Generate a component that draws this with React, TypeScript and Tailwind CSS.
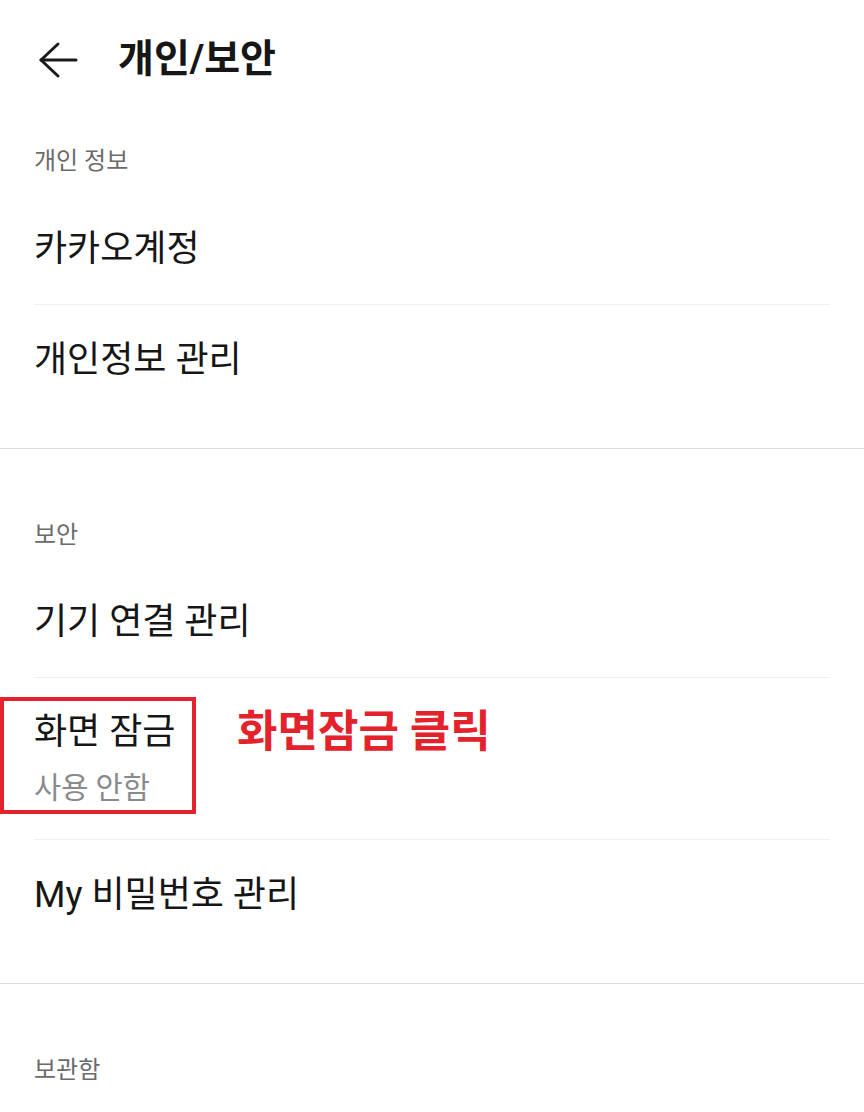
import React from "react";

const font = { fontFamily: 'Roboto, "Noto Sans CJK KR", sans-serif' };

function BackArrow() {
    return (
        <svg width="40" height="40" viewBox="0 0 40 40" fill="none" stroke="#1a1a1a" strokeWidth="3" strokeLinecap="round" strokeLinejoin="round">
            <path d="M3 20 L38 20" />
            <path d="M20 4 L3 20 L20 36" />
        </svg>
    );
}

function Divider() {
    return <div className="h-px bg-[#f0f0f0] mx-[34px]" />;
}

function SectionLabel({ text }: { text: string }) {
    return <div className="h-[34px] leading-[34px] pl-[34px] text-[24px] text-[#6b6b6b]">{text}</div>;
}

function Row({ text }: { text: string }) {
    return (
        <div className="h-[110px] flex items-center pl-[34px] text-[36px] text-[#161616]">{text}</div>
    );
}

export default function App() {
    return (
        <div className="w-[864px] min-h-[1112px] bg-white" style={font}>
            <div className="h-[116px] flex items-center pt-[3px]">
                <div className="ml-[38px]">
                    <BackArrow />
                </div>
                <h1 className="ml-[40px] text-[39px] font-bold text-[#161616]">개인/보안</h1>
            </div>

            <div className="pt-[28px] pb-[33px]">
                <SectionLabel text="개인 정보" />
                <div className="mt-4">
                    <Row text="카카오계정" />
                    <Divider />
                    <Row text="개인정보 관리" />
                </div>
            </div>

            <div className="h-px bg-[#dedede]" />

            <div className="pt-[69px] pb-[33px]">
                <SectionLabel text="보안" />
                <div className="mt-[15px]">
                    <Row text="기기 연결 관리" />
                    <Divider />
                    <div className="relative h-[161px] flex pl-[34px] pt-[33px]">
                        <div className="w-[203px] flex flex-col">
                            <div className="leading-[42px] text-[36px] text-[#161616]">화면 잠금</div>
                            <div className="mt-[16px] leading-[38px] text-[29.5px] text-[#8a8a8a]">사용 안함</div>
                        </div>
                        <div className="leading-[42px] text-[44px] font-bold text-[#e3222b]">화면잠금 클릭</div>
                        <div className="absolute left-0 top-[19px] w-[196px] h-[117px] border-4 border-[#e3222b]" />
                    </div>
                    <Divider />
                    <Row text="My 비밀번호 관리" />
                </div>
            </div>

            <div className="h-px bg-[#dedede]" />

            <div className="pt-[69px]">
                <SectionLabel text="보관함" />
            </div>
        </div>
    );
}
